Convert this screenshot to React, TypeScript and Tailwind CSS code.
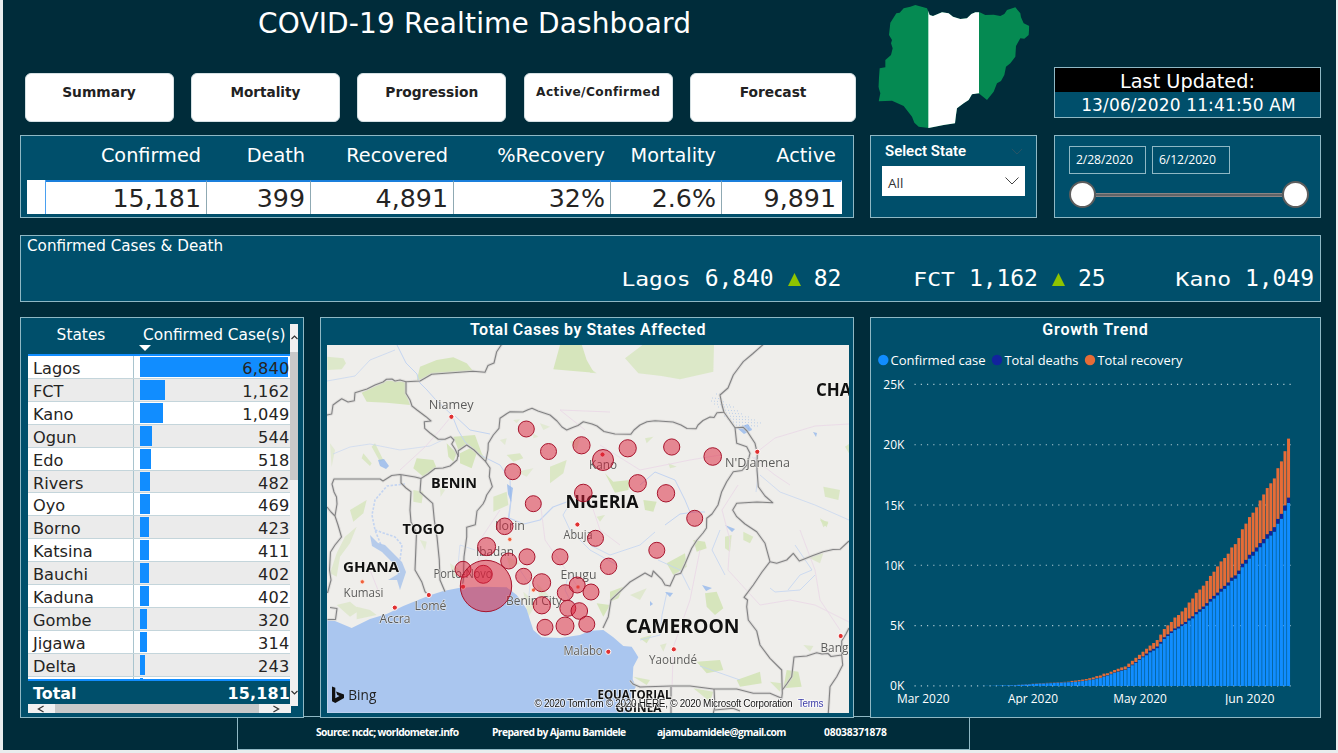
import React from "react";

const VERDANA = "font-['DejaVu_Sans',sans-serif]";
const DIN = "font-['Roboto',sans-serif]";
const SEGOE = "font-['Open_Sans',sans-serif]";
const MONO = "font-['DejaVu_Sans_Mono',monospace]";
const PANEL = "border border-[#8fb8c4] bg-[#004f6b]";

const buttons = [
  { label: "Summary", cls: "w-[149px] text-[13.8px]" },
  { label: "Mortality", cls: "w-[149px] text-[13.6px]" },
  { label: "Progression", cls: "w-[149px] text-[13.8px]" },
  { label: "Active/Confirmed", cls: "w-[149px] text-[12.2px] tracking-[0.35px]" },
  { label: "Forecast", cls: "w-[166px] text-[13.8px]" },
];

const kpis = [
  { name: "Confirmed", value: "15,181", w: "w-[161px]" },
  { name: "Death", value: "399", w: "w-[104px]" },
  { name: "Recovered", value: "4,891", w: "w-[143px]" },
  { name: "%Recovery", value: "32%", w: "w-[157px]" },
  { name: "Mortality", value: "2.6%", w: "w-[111px]" },
  { name: "Active", value: "9,891", w: "w-[120px]" },
];

const states: [string, number][] = [
  ["Lagos", 6840],
  ["FCT", 1162],
  ["Kano", 1049],
  ["Ogun", 544],
  ["Edo", 518],
  ["Rivers", 482],
  ["Oyo", 469],
  ["Borno", 423],
  ["Katsina", 411],
  ["Bauchi", 402],
  ["Kaduna", 402],
  ["Gombe", 320],
  ["Jigawa", 314],
  ["Delta", 243],
];

// Cumulative daily figures, 28 Feb to 12 Jun 2020
const confirmed = [
  1, 1, 1, 1, 1, 1, 1, 1, 1, 2, 2, 2, 2, 2, 2, 2, 2, 2, 3, 8, 12, 12, 22, 30, 40, 44, 51, 65, 70, 97, 111, 131,
  139, 174, 184, 210, 214, 232, 238, 254, 276, 288, 305, 318, 323, 343, 373, 407, 442, 493, 542, 627, 665, 782, 873,
  981, 1095, 1182, 1273, 1337, 1532, 1728, 1932, 2170, 2388, 2558, 2802, 2950, 3145, 3526, 3912, 4151, 4399, 4641,
  4787, 4971, 5162, 5445, 5621, 5959, 6175, 6401, 6677, 7016, 7261, 7526, 7839, 8068, 8344, 8733, 8915, 9302, 9855,
  10162, 10578, 10819, 11166, 11516, 11844, 12233, 12486, 12801, 13464, 13873, 14554, 15181,
];
const lateRecovery = [
  351, 385, 400, 417, 481, 534, 601, 679, 745, 778, 902, 959, 1070, 1180, 1320, 1472, 1594, 1644, 1734, 1840, 1907,
  2007, 2174, 2263, 2311, 2385, 2501, 2592, 2697, 2856, 3007, 3122, 3239, 3329, 3535, 3696, 3826, 3959, 4040, 4206,
  4351, 4494, 4891,
];
const lateStart = confirmed.length - lateRecovery.length;

function Flag() {
  return (
    <svg className="ml-[7px] mt-[3px] h-[127px] w-[154px]" viewBox="50 9 462 381">
      <defs>
        <clipPath id="nigeria">
          <path d="M90 68L108 40L118 38L130 25L150 20L165 15L200 25L208 45L218 48L245 37L265 40L278 50L300 57L320 55L333 42L345 37L358 37L375 45L400 44L420 48L432 42L440 30L465 22L480 40L482 52L490 70L507 78L505 105L492 116L480 115L467 138L465 170L450 190L437 200L432 225L422 243L410 250L400 275L380 300L368 290L355 280L335 283L325 300L310 310L290 325L287 345L284 370L250 375L205 384L175 380L162 368L155 350L130 318L95 302L55 304L60 280L54 260L58 205L75 202L75 180L92 165L97 145L92 130L95 120L86 105Z" />
        </clipPath>
      </defs>
      <g clipPath="url(#nigeria)">
        <rect x="50" y="9" width="462" height="381" fill="#058a52" />
        <rect x="204" y="9" width="152" height="381" fill="#fff" />
      </g>
    </svg>
  );
}

const bubbles: [number, number, number][] = [
  [526.3, 429, 8], [548.5, 451.5, 8], [581.5, 445.3, 8.6], [603, 460, 10.5], [627.7, 448.3, 8.6], [671.7, 447, 8.1],
  [712.7, 456.5, 8.8], [512.7, 471.7, 8], [533.3, 503.7, 8], [583.3, 493, 8.8], [637.7, 483.3, 8.7], [666, 493.3, 8.7],
  [694.7, 518.3, 8], [504.7, 526.3, 8.3], [595.5, 538.3, 8], [656.8, 550.3, 8], [608.6, 566.3, 8.2], [486.6, 546.6, 9],
  [508.7, 561, 8], [527, 556.8, 8], [560, 556.8, 8], [463, 569.3, 8], [483.3, 574.3, 9], [486, 586, 25.7],
  [523.7, 576.3, 8], [541.7, 582.7, 9], [565.3, 592.7, 8], [577.2, 585, 8], [591, 592, 8], [541.8, 605.3, 8.6],
  [567.8, 608.3, 8], [579.3, 611, 8.3], [545, 627.3, 8], [565, 626, 9], [586.8, 624.2, 8],
];

const cities: [number, number][] = [
  [451.4, 416.8], [757.3, 451.8], [577.4, 524.5], [602.5, 454.5], [428.8, 595], [394.8, 607.6], [608.3, 651.8],
  [673.8, 649.3], [840.7, 636], [463, 586.7],
];

function MapLabel(p: { x: number; y: number; w: number; s: number; bold?: boolean; children: string }) {
  return (
    <text
      x={p.x}
      y={p.y}
      fontSize={p.s}
      textLength={p.w}
      lengthAdjust="spacingAndGlyphs"
      fontWeight={p.bold ? 700 : 400}
      fill={p.bold ? "#111" : "#5c5c5c"}
      stroke="#f4f2ee"
      strokeWidth={p.bold ? 1.6 : 1.2}
      strokeOpacity={0.8}
      paintOrder="stroke"
    >
      {p.children}
    </text>
  );
}

function AfricaMap() {
  const green = "#d6e5bc";
  return (
    <svg className={`h-[368px] w-[522px] ${SEGOE}`} viewBox="327 345 522 368">
      <rect x="327" y="345" width="522" height="368" fill="#efeeeb" />
      {/* vegetation */}
      <g transform="translate(320 310) scale(.33333)" fill={green}>
        <path d="M22 140L70 145L78 160L65 178L22 180Z" opacity=".7" />
        <path d="M290 213L300 170L350 150L400 142L440 160L460 184L335 193Z" />
        <path d="M125 248L200 212L258 215L258 250L270 285L200 278L140 275Z" />
        <path d="M720 105L785 103L800 150L822 188L760 183L700 178Z" />
        <path d="M400 380L465 375L485 430L497 450L440 405L415 420Z" />
        <path d="M380 400L410 430L400 455L385 440ZM420 430L450 415L470 430L455 475L420 460Z" />
        <path d="M290 445L340 450L350 475L310 500L280 475Z" />
        <path d="M165 400L190 450L180 455L155 410ZM130 430L155 460L150 468L125 445Z" opacity=".8" />
        <path d="M90 600L140 570L130 610L100 635ZM280 540L310 545L305 580L280 575Z" opacity=".8" />
        <path d="M520 560L560 545L565 585L520 605ZM690 470L740 450L730 490L690 520ZM560 435L600 430L610 445L580 455Z" opacity=".8" />
        <path d="M30 400L45 420L35 470ZM750 395L780 385L770 420ZM590 485L640 475L620 500Z" opacity=".5" />
        <path d="M580 330L600 328L590 340ZM660 340L690 350L670 360ZM540 390L560 385L555 405ZM640 370L655 380L640 385ZM420 510L440 505L430 530ZM360 530L375 540L362 560Z" opacity=".5" />
      </g>
      <g transform="translate(590 310) scale(.33333)" fill={green}>
        <path d="M105 145L160 103L372 103L370 185L270 208L215 198L145 190ZM0 175L20 190L0 188Z" opacity=".75" />
        <path d="M45 490L70 515L120 510L115 540L75 548ZM160 570L200 575L190 605L165 600Z" />
        <path d="M700 530L750 540L745 570L705 560ZM690 625L715 640L700 652ZM765 410L780 400L780 435Z" opacity=".8" />
        <path d="M165 385L190 380L170 400ZM235 460L260 470L240 475ZM20 620L45 615L30 635Z" opacity=".7" />
      </g>
      <g transform="translate(320 520) scale(.33333)" fill={green}>
        <path d="M30 160L50 100L75 50L110 20L90 70L60 110L50 170ZM50 255L90 245L120 270L90 290ZM110 260L150 270L170 285L110 298Z" opacity=".6" />
        <path d="M300 60L320 65L315 90ZM390 130L420 150L400 180ZM650 190L690 230L660 240ZM610 215L650 250L625 290ZM560 110L600 130L570 145Z" opacity=".5" />
      </g>
      <g transform="translate(590 520) scale(.33333)" fill={green}>
        <path d="M310 60L345 65L350 85L320 95ZM230 130L285 100L290 140L250 165ZM60 215L100 200L85 235L60 245ZM20 250L60 255L40 290Z" />
        <path d="M345 220L380 215L400 265L375 285L350 260ZM320 425L390 420L400 450L350 460ZM440 480L510 455L515 490L450 500ZM590 450L625 455L635 500L580 505Z" />
        <path d="M460 35L490 50L480 70L460 60ZM405 50L425 45L420 95L405 85ZM690 0L715 5L710 22ZM150 355L185 345L170 370ZM540 485L575 490L570 515ZM130 470L180 480L170 495ZM310 505L370 515L360 545Z" opacity=".85" />
        <path d="M120 225L170 205L150 240ZM650 110L700 100L690 130ZM210 375L230 370L220 395ZM640 375L670 378L660 395Z" opacity=".6" />
      </g>
      {/* sea */}
      <g transform="translate(320 520) scale(.33333)" fill="#aac6ef">
        <path d="M22 300L45 303L95 324L150 297L200 282L250 258L300 238L330 226L370 213L420 203L480 200L560 202L590 225L605 245L620 268L630 300L640 330L665 352L720 354L780 345L810 332L850 330L880 352L910 378L935 380L945 395L955 412L940 440L938 478L948 500L935 520L930 578L22 578Z" />
      </g>
      {/* rivers and lakes */}
      <g fill="none" stroke="#c3d4f1" strokeWidth="1" strokeLinejoin="round">
        <path d="M397 345L406 363L417 374L419 382L427 390L435 399L452 415L458 430L465 442M465 442L480 455L500 465L510 480L511 500L508 520" />
        <path d="M511 500L509 518L524 524L540 520L546 514L553 507L572 500" strokeWidth="1.2" />
        <path d="M327 381L355 376L370 360L395 350" opacity=".7" />
        <path d="M333 454L350 447L370 444L400 450L430 446L447 438" opacity=".6" />
        <path d="M405 484L387 486L375 500L372 515L375 530L381 545M375 530L395 537L402 545L400 560" strokeWidth="1.6" strokeDasharray="2.5 1.5" />
        <path d="M455 416L470 430L490 434M640 485L655 472L675 480L685 500L690 512L705 512M665 525L680 514L695 512" />
        <path d="M590 545L610 555L640 545L655 532M572 500L563 515L570 530L590 550L617 565" opacity=".8" />
        <path d="M577 605L570 600L565 590L567 580L575 575" opacity=".7" />
        <path d="M755 457L758 475L756 492M760 475L780 492L815 505L849 520" opacity=".7" />
        <path d="M720 530L712 550L725 575M788 590L800 575L812 570L795 545M815 575L800 590L775 592L770 588" opacity=".8" />
        <path d="M667 592L662 615L660 635L640 640M658 560L680 570L690 590M700 666L740 680" opacity=".8" />
        <path d="M475 550L460 545L458 565M520 570L530 585L528 605" opacity=".6" />
      </g>
      <g fill="#8fb4ec" opacity=".75">
        <path d="M378 460L384 459L389 466L386 469L380 466ZM507 484L513 488L511 502L508 494ZM737 428L748 424L752 430L744 434ZM813 432L817 433L816 437Z" />
        <path d="M370 535L378 543L385 545L393 553L402 562L406 572L400 590L397 580L388 580L398 574L392 562L382 552L372 546Z" opacity=".8" />
        <path d="M725 525L735 529L732 532ZM702 585L712 588L706 591ZM665 592L673 593L670 597ZM650 601L653 604L650 606Z" />
      </g>
      <g fill="none" stroke="#86aee8" strokeWidth=".8" strokeDasharray=".8 2.2" opacity=".75">
        <path d="M712 398L724 399M711 401L726 402M714 404L730 405M718 407L734 407M722 410L740 411M726 413L744 414M724 416L750 417M727 419L756 420M730 422L762 423M733 425L758 426M736 428L752 429M716 394L720 394" />
      </g>
      {/* roads */}
      <g fill="none" stroke="#ead9e6" strokeWidth=".9">
        <path d="M757 452L775 438L815 426L849 424M752 457L775 475L790 485M738 485L722 510L730 540L728 570L760 605L790 600L815 605L849 622M800 530L815 570L820 600L840 630" />
        <path d="M600 445L640 470L690 460L720 455M590 500L600 530L620 545M585 430L560 410L610 412M673 655L672 690M700 550L690 600L673 648" />
        <path d="M450 418L440 430L425 447L400 470M500 510L480 540L478 570M540 500L545 540L580 590M380 595L370 570L362 560" />
      </g>
      {/* country borders */}
      <g fill="none" stroke="#d8d6d4" strokeWidth="3" strokeLinejoin="round" opacity=".7">
        <Borders />
      </g>
      <g fill="none" stroke="#828283" strokeWidth="1.1" strokeLinejoin="round">
        <Borders />
      </g>
      {/* labels */}
      <MapLabel x={428.7} y={408.5} w={45} s={13}>Niamey</MapLabel>
      <MapLabel x={725} y={467} w={65} s={13}>N'Djamena</MapLabel>
      <MapLabel x={589} y={469} w={28} s={12.5}>Kano</MapLabel>
      <MapLabel x={495} y={530} w={30} s={12.5}>Ilorin</MapLabel>
      <MapLabel x={563.5} y={538.5} w={29} s={12.5}>Abuja</MapLabel>
      <MapLabel x={476} y={556} w={38} s={12.5}>Ibadan</MapLabel>
      <MapLabel x={433.5} y={577.5} w={59} s={12}>Porto-Novo</MapLabel>
      <MapLabel x={560.5} y={578.5} w={36} s={12.5}>Enugu</MapLabel>
      <MapLabel x={506} y={605} w={56} s={12.5}>Benin City</MapLabel>
      <MapLabel x={343.5} y={597} w={40} s={12.5}>Kumasi</MapLabel>
      <MapLabel x={414.5} y={610} w={32} s={12.5}>Lomé</MapLabel>
      <MapLabel x={379.5} y={623} w={31} s={12.5}>Accra</MapLabel>
      <MapLabel x={563.5} y={655} w={39} s={12.5}>Malabo</MapLabel>
      <MapLabel x={649} y={664} w={48} s={12.5}>Yaoundé</MapLabel>
      <MapLabel x={820.5} y={652} w={38} s={12.5}>Bangui</MapLabel>
      <MapLabel bold x={431} y={488} w={46} s={15}>BENIN</MapLabel>
      <MapLabel bold x={402.5} y={533.5} w={42} s={15}>TOGO</MapLabel>
      <MapLabel bold x={343} y={571.5} w={56} s={15}>GHANA</MapLabel>
      <MapLabel bold x={565.5} y={508} w={73} s={18}>NIGERIA</MapLabel>
      <MapLabel bold x={816} y={396} w={48} s={18}>CHAD</MapLabel>
      <MapLabel bold x={625.5} y={633} w={114} s={20}>CAMEROON</MapLabel>
      <MapLabel bold x={597.5} y={698.5} w={74} s={12.5}>EQUATORIAL</MapLabel>
      <MapLabel bold x={615.5} y={712} w={46} s={12.5}>GUINEA</MapLabel>
      <g fill="#e03030" stroke="#fff" strokeWidth="1">
        {cities.map(([x, y], i) => (
          <circle key={i} cx={x} cy={y} r="2.6" />
        ))}
      </g>
      <g fill="#f0603a" stroke="#fbe5dc" strokeWidth=".8">
        <circle cx="362.3" cy="581.8" r="2.1" />
        <circle cx="509.8" cy="539.4" r="2.1" />
        <circle cx="533.5" cy="590" r="2.1" />
        <circle cx="578" cy="587" r="2.1" />
      </g>
      <g fill="#db1f3a" fillOpacity=".5" stroke="#a6142c" strokeWidth="1">
        {bubbles.map(([x, y, r], i) => (
          <circle key={i} cx={x} cy={y} r={r} />
        ))}
      </g>
      {/* provider mark and copyright */}
      <path d="M332 686.5L335.3 687.7V698.3L339.5 696L337.3 695L336 691.6L344 694.5V698L335.3 703L332 701.2Z" fill="#111" />
      <text x="348.3" y="700" fontSize="14" textLength="28" lengthAdjust="spacingAndGlyphs" fill="#222">Bing</text>
      <g className="font-['Liberation_Sans',sans-serif]" fontSize="10" stroke="#fff" strokeOpacity=".75" strokeWidth="1.6" paintOrder="stroke">
        <text x="534.5" y="707" textLength="258" fill="#111">© 2020 TomTom © 2020 HERE, © 2020 Microsoft Corporation</text>
        <text x="798" y="707" textLength="25.5" fill="#3c3ca8">Terms</text>
      </g>
    </svg>
  );
}

function Borders() {
  return (
    <>
      <path d="M501.7 344.3L496.7 351.7L494 363L488 365.5L485 372.3L473 371.3L431.7 374.3L420 381L406 381.7L400 380L395 381L392 379L386.5 379.3L383 382L375 385L367 389L355 392.7L354.3 400.7L348 402L341.7 398.7L337 402L333 405L331.7 414L327 415" />
      <path d="M406 381.7L406 393.3L410 400L412 406L417 410L426 416.7L431 421L424.3 421.7L424.7 428.3L430 433L438.3 439.3L445 439.3L450.7 436.7L454 440L451.7 444L455 449L458 455.5L457 460L450 466L443 468L435 468.5L428 474L421 478.5L420 492L432.7 503.3L434.3 520L437 537L439.3 560L440 580L445 591.7" />
      <path d="M458.3 456.7L458.3 450.7L466.7 445L474 450L485.7 461.7L488 450L488.3 443.3L493.3 435L499 428.3L500 418.3L507 413.5L510 411.7L523 412L528 409.7L532 408.3L538 411L550 415L557 421L562 427L566.7 430L573.3 427.3L578 425.5L583.3 421.7L592 424L597 426L604 431.5L615 434L630.7 434.3L634 430L640 425L647 421.7L655 420.7L673 422L681 425L687 428.5L696 428.7L698 425L703 420.5L710 417L714 417.5L717 412.7L724 412.3" />
      <path d="M485.7 461.7L490 468L489.3 476.7L492.3 486.7L486.7 495L485 500L483 504L477 511L475.3 524.7L466.7 527.3L466.7 537L464 556.7L463.3 580L462 588" />
      <path d="M421 478.5L415 477L400 474.5L391.7 475.5L383 481L380 479L340 479L334 479L332 484L334 492L336.5 497L337 504L335 516L338 525L341.5 537L335 545L330.5 552L329.5 570L331 580L327.5 593M330 607.5L337 608.5L335.5 619.5L327.5 619.5M327 507L331 512L335 516" />
      <path d="M401 475L401 483L406 488L411 491.7L410 510L411 522L416.5 533L415 570L421.7 581.7L425 591.7L428.3 595" />
      <path d="M763.3 344.3L753 353.5L743.3 361.7L740 366L733.3 375L728 388L720 395L722 405L724 412.3L735 427.7L736.7 443.3L746.7 446.7L750 453.3L747 465L742 470.5L733.3 471.7L726.7 481.7L721.7 491.7L718 505L712 514L706.7 518.3L706.5 528L703 533L697 540L691.7 548.3L685 564L680.7 573.3L675 575L670 586L665 585L661.7 579.3L653.3 571L651.7 576.7L645 573L641.7 575L630 582L623.3 588.3L611 600L610 606L608.3 616.7L603 628" />
      <path d="M735 427.7L743.3 427.3L747 431L751.7 438.3L755 443.3L757.3 453.3L757 470L758.3 486.7L765 496L772.7 502.7L757 502L736.7 503.3L732.7 510L736.7 516.7L745 524L756.7 531.7L765 543.3L770 561.7L776.7 563.3L786.7 560L793.3 553.3L799.3 561L813 555.5L823.3 551.7L833 549.5L840 549.3L849 541" />
      <path d="M770 561.7L762 572L753.3 585L744 597.3L747.5 600L746.7 606.7L748.3 620L756.7 631L760 645L770 658.3L781.7 670L782.3 693.3L781.7 698.3L770 693.3L753.3 693.3L736.7 689L713.3 689L690 686L671 686L640 687L633 684L630 680.5" />
      <path d="M671 687L671 713M714 689L715 706.7L713.3 713M715 710L733 708.3L740 711" />
      <path d="M782.3 690L786.7 684L791.7 676.7L794 657L806.7 656L816.7 652.7L822 654L828 653.5L831 656.5L841.7 655L842.7 665L836.7 676.7L830 686.7L828.3 713M849 628L846 634L841.7 641V655" />
    </>
  );
}

function GrowthChart() {
  const y0 = 686;
  const k = 0.01206;
  const pitch = 3.55;
  const n = confirmed.length;
  const ticks = [0, 5, 10, 15, 20, 25];
  return (
    <svg className={`h-[360px] w-[449px] ${SEGOE}`} viewBox="871 345 449 360">
      <g fontSize="13.5" fill="#fff">
        <circle cx="883.3" cy="360" r="5.2" fill="#118dff" />
        <text x="890.5" y="365" textLength="95" lengthAdjust="spacingAndGlyphs">Confirmed case</text>
        <circle cx="997" cy="360" r="5.2" fill="#12239e" />
        <text x="1004.5" y="365" textLength="74" lengthAdjust="spacingAndGlyphs">Total deaths</text>
        <circle cx="1090" cy="360" r="5.2" fill="#e66c37" />
        <text x="1097.5" y="365" textLength="85" lengthAdjust="spacingAndGlyphs">Total recovery</text>
      </g>
      <g fontSize="12.3" fill="#fff">
        {ticks.map((v) => (
          <text key={v} x={v < 10 ? 890 : v < 20 ? 884.3 : 883.3} y={y0 - v * 1000 * k + 4.4} textLength={v < 10 ? 14.3 : v < 20 ? 20 : 21} lengthAdjust="spacingAndGlyphs">
            {`${v}K`}
          </text>
        ))}
        <text x="897" y="703.2" textLength="52.5" lengthAdjust="spacingAndGlyphs">Mar 2020</text>
        <text x="1008" y="703.2" textLength="50" lengthAdjust="spacingAndGlyphs">Apr 2020</text>
        <text x="1113.3" y="703.2" textLength="53.5" lengthAdjust="spacingAndGlyphs">May 2020</text>
        <text x="1225" y="703.2" textLength="49.5" lengthAdjust="spacingAndGlyphs">Jun 2020</text>
      </g>
      <g stroke="#a9c7d1" strokeWidth="1.1" strokeDasharray="1.2 5.05">
        {ticks.map((v) => (
          <line key={v} x1="914.5" x2="1292" y1={y0 - v * 1000 * k - 0.1} y2={y0 - v * 1000 * k - 0.1} />
        ))}
      </g>
      {confirmed.map((c, i) => {
        const rec =
          i >= lateStart ? lateRecovery[i - lateStart] : c < 60 ? 0 : i < 44 ? c * 0.1 : i < 54 ? c * 0.28 : c * 0.18;
        const death = c * (i < lateStart ? 0.03 : 0.029);
        const x = 1290.2 - (n - i) * pitch + 0.4;
        const hc = c * k;
        const hd = Math.max(death * k, c > 2500 ? 1.6 : 0);
        const hr = rec * k;
        return (
          <g key={i}>
            <rect x={x} width="3" y={y0 - hc} height={hc} fill="#118dff" />
            <rect x={x} width="3" y={y0 - hc - hd} height={hd} fill="#12239e" />
            <rect x={x} width="3" y={y0 - hc - hd - hr} height={hr} fill="#e66c37" />
          </g>
        );
      })}
    </svg>
  );
}

function Chevron({ className, d, sw = 1 }: { className: string; d: string; sw?: number }) {
  return (
    <svg className={className} viewBox="0 0 14 8" fill="none" stroke="currentColor" strokeWidth={sw}>
      <path d={d} />
    </svg>
  );
}

function Kpi({ name, value, up, tail }: { name: string; value: string; up?: string; tail: string }) {
  return (
    <div className={`flex items-baseline text-white ${MONO} ${tail}`}>
      <span className="origin-[50%_82%] scale-y-[0.86] text-[23px] leading-none">{name}</span>
      <span className="ml-[14px] text-[23px] leading-none tracking-[-0.05px]">{value}</span>
      {up && (
        <>
          <svg className="ml-[14px] h-[13px] w-[13px]" viewBox="0 0 13 13">
            <path d="M0 13L6.5 0L13 13Z" fill="#8fc400" />
          </svg>
          <span className="ml-[13px] text-[23px] leading-none">{up}</span>
        </>
      )}
    </div>
  );
}

export default function App() {
  return (
    <div className="h-[753px] w-[1338px] overflow-hidden bg-[#e9edee] pl-[3px] pr-[2px]">
      <div className="relative h-[750px] bg-[#002c3a] pl-[17px]">
        <div className="flex h-[135px]">
          <div className="w-[850px]">
            <h1 className={`pl-[238px] pt-[6px] text-[28px] leading-[36px] tracking-[0.15px] whitespace-nowrap text-white ${VERDANA}`}>
              COVID-19 Realtime Dashboard
            </h1>
            <nav className={`mt-[31px] flex gap-[17.4px] pl-[4.5px] font-bold text-[#222] ${VERDANA}`}>
              {buttons.map((b) => (
                <button
                  key={b.label}
                  className={`flex h-[49px] shrink-0 items-start justify-center rounded-[6px] border border-[#d5e0e3] bg-white pt-[8px] leading-[20px] ${b.cls}`}
                >
                  {b.label}
                </button>
              ))}
            </nav>
          </div>
          <div className="w-[184px]">
            <Flag />
          </div>
          <div className={`mt-[67px] h-[51px] w-[267px] border border-[#8fb8c4] bg-[#004f6b] text-center whitespace-nowrap text-white ${VERDANA}`}>
            <div className="h-[24px] bg-black text-[19.3px] leading-[27px]">Last Updated:</div>
            <div className="pl-[2px] text-[17px] leading-[27px] tracking-[0.15px]">13/06/2020 11:41:50 AM</div>
          </div>
        </div>

        <div className={`flex h-[83px] text-white ${VERDANA}`}>
          <div className={`w-[834px] pl-[6px] ${PANEL}`}>
            <div className="flex h-[44px] pl-[19px] text-[19.3px] leading-[40px]">
              {kpis.map((k) => (
                <div key={k.name} className={`shrink-0 pr-[6px] text-right ${k.w}`}>
                  {k.name}
                </div>
              ))}
            </div>
            <div className="flex h-[34px] w-[815px] bg-white text-[25.3px] leading-[34px] text-[#252423]">
              <div className="w-[19px] border-r border-[#4aa0f0]" />
              {kpis.map((k) => (
                <div key={k.name} className={`shrink-0 border-t-2 border-r border-t-[#1a7fdc] border-r-[#8fa9b3] pr-[5px] text-right last:border-r-white ${k.w}`}>
                  {k.value}
                </div>
              ))}
            </div>
          </div>

          <div className={`ml-[16px] w-[167px] px-[11px] ${PANEL}`}>
            <div className={`flex h-[30px] items-center justify-between pl-[3px] text-[15px] font-semibold ${DIN}`}>
              Select State
              <Chevron className="mr-[2px] h-[7px] w-[12px] text-[#2f5566]" d="M1 1L7 7L13 1" />
            </div>
            <div className={`flex h-[30px] items-center justify-between bg-white pr-[6px] pl-[6px] text-[13.5px] text-[#333] ${SEGOE}`}>
              <span className="pt-[5px]">All</span>
              <Chevron className="h-[8px] w-[14px] text-[#444]" d="M.5 .5L7 7L13.5 .5" />
            </div>
          </div>

          <div className={`ml-[17px] w-[267px] pt-[10px] pl-[14px] ${PANEL}`}>
            <div className={`flex gap-[6px] text-[12.2px] leading-[26px] tracking-[-0.1px] ${SEGOE}`}>
              <div className="h-[28px] w-[77px] border border-[#8fb8c4] pl-[6px]">2/28/2020</div>
              <div className="h-[28px] w-[78px] border border-[#8fb8c4] pl-[6px]">6/12/2020</div>
            </div>
            <div className="mt-[7px] flex items-center">
              <div className="size-[27px] shrink-0 rounded-full border-[2.5px] border-[#5d5d5d] bg-white" />
              <div className="h-[4px] w-[186px] shrink-0 border-y border-[#8a8484] bg-[#5f6468]" />
              <div className="size-[27px] shrink-0 rounded-full border-[2.5px] border-[#5d5d5d] bg-white" />
            </div>
          </div>
        </div>

        <div className={`mt-[17px] h-[67px] w-[1301px] pl-[6px] ${PANEL}`}>
          <div className={`h-[31px] text-[15.2px] leading-[20px] text-white ${VERDANA}`}>Confirmed Cases &amp; Death</div>
          <div className="flex justify-end">
            <Kpi name="Lagos" value="6,840" up="82" tail="mr-[72px]" />
            <Kpi name="FCT" value="1,162" up="25" tail="mr-[70px]" />
            <Kpi name="Kano" value="1,049" tail="mr-[6px]" />
          </div>
        </div>

        <div className="mt-[15px] flex h-[401px]">
          <div className={`flex w-[284px] pt-[6px] pl-[7px] ${PANEL} ${VERDANA}`}>
            <div className="w-[262px]">
              <div className="relative flex h-[30px] text-[15.4px] leading-[23px] whitespace-nowrap text-white">
                <div className="w-[106px] text-center">States</div>
                <div className="pl-[9px]">Confirmed Case(s)</div>
                <svg className="absolute top-[21px] left-[111px] h-[6px] w-[12px]" viewBox="0 0 12 6">
                  <path d="M0 0H12L6 6Z" fill="#fff" />
                </svg>
              </div>
              <div className="h-[327px] overflow-hidden border-t-2 border-b-2 border-[#118dff] bg-white text-[16.2px] leading-[25px] text-[#252423]">
                {states.map(([name, v], i) => (
                  <div key={name} className={`flex h-[22.92px] border-b border-[#c4d5db] ${i % 2 ? "bg-[#ebebeb]" : "bg-white"}`}>
                    <div className="w-[106px] border-r border-[#a9c4ce] pl-[5px]">{name}</div>
                    <div className="relative grow">
                      <div className="absolute top-[1px] bottom-[1px] left-[6px] bg-[#118dff]" style={{ width: Math.max(5, v * 0.0217) }} />
                      <div className="relative pr-[0.5px] text-right tracking-[0.2px]">{v.toLocaleString("en-US")}</div>
                    </div>
                  </div>
                ))}
                <div className="flex h-[23px]">
                  <div className="w-[106px] border-r border-[#a9c4ce]" />
                  <div className="mt-[1px] ml-[6px] w-[3px] bg-[#118dff]" />
                </div>
              </div>
              <div className="flex h-[23px] justify-between pl-[5px] text-[15.9px] leading-[25px] font-bold text-white">
                <span>Total</span>
                <span className="tracking-[0.2px]">15,181</span>
              </div>
              <div className="flex h-[9px] w-[263px] items-center bg-[#f1f1f1] text-[#333]">
                <Chevron className="ml-[7px] h-[8px] w-[12px]" sw={1.5} d="M10 .5L4 4L10 7.5" />
                <div className="ml-[8px] h-full w-[204px] bg-[#c9c9c9]" />
                <Chevron className="ml-[11px] h-[8px] w-[12px]" sw={1.5} d="M4 .5L10 4L4 7.5" />
              </div>
            </div>
            <div className="flex h-[382px] w-[8px] flex-col items-center bg-[#f1f1f1] text-[#333]">
              <Chevron className="mt-[11px] h-[5px] w-[7px]" sw={2.4} d="M1 7L7 1L13 7" />
              <div className="mt-[12px] h-[128px] w-full bg-[#c9c9c9]" />
              <Chevron className="mt-auto mb-[11px] h-[5px] w-[7px]" sw={2.4} d="M1 1L7 7L13 1" />
            </div>
          </div>

          <div className={`ml-[16px] w-[534px] pl-[6px] ${PANEL}`}>
            <div className={`h-[27px] w-[522px] text-center text-[16px] leading-[23px] font-semibold tracking-[0.52px] text-white ${DIN}`}>
              Total Cases by States Affected
            </div>
            <AfricaMap />
          </div>

          <div className={`ml-[16px] w-[451px] ${PANEL}`}>
            <div className={`h-[27px] text-center text-[16px] leading-[23px] font-semibold tracking-[0.8px] text-white ${DIN}`}>
              Growth Trend
            </div>
            <GrowthChart />
          </div>
        </div>

        <footer className={`-mt-[2px] ml-[217px] flex h-[34px] w-[733px] border border-[#8fb8c4] pl-[78px] text-[10.3px] leading-[31px] font-bold whitespace-nowrap text-white ${SEGOE}`}>
          <span className="w-[176px] tracking-[-0.6px]">Source: ncdc; worldometer.info</span>
          <span className="w-[165px] tracking-[-0.6px]">Prepared by Ajamu Bamidele</span>
          <span className="w-[167px] tracking-[-0.6px]">ajamubamidele@gmail.com</span>
          <span className="tracking-[-0.2px]">08038371878</span>
        </footer>
      </div>
    </div>
  );
}
